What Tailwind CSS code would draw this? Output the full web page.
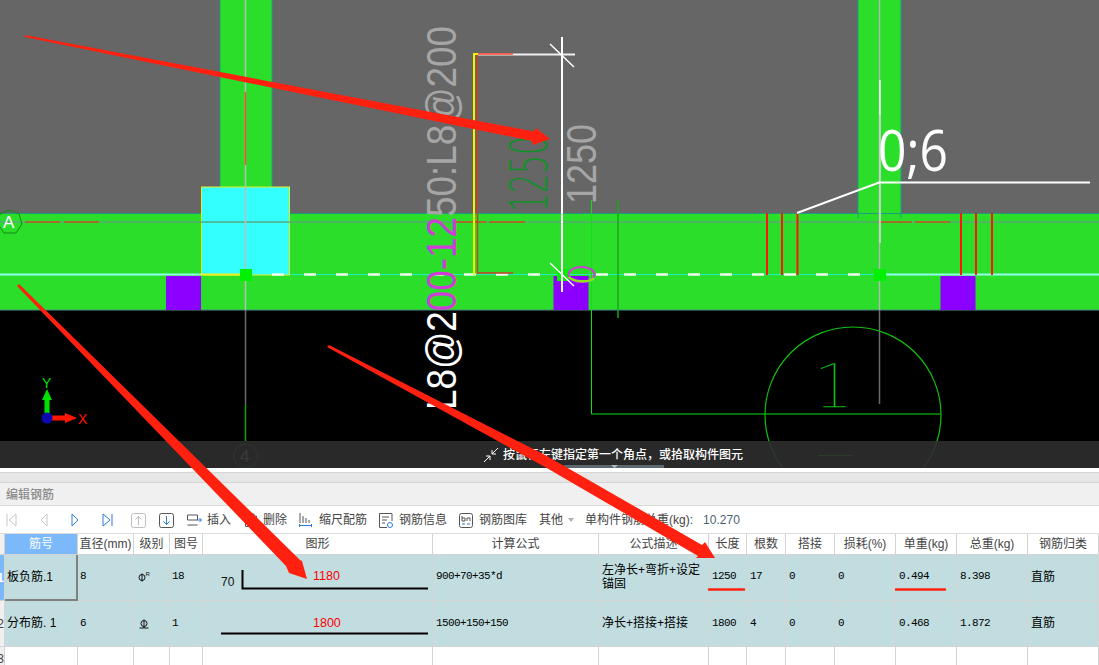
<!DOCTYPE html>
<html lang="zh-CN">
<head>
  <meta charset="UTF-8">
  <title>编辑钢筋</title>
  <script src="https://cdn.jsdelivr.net/npm/@tailwindcss/browser@4"></script>
</head>
<body class="relative w-[1099px] h-[665px] overflow-hidden bg-white text-[12px] text-[#444] font-['Liberation_Sans','Noto_Sans_CJK_SC',sans-serif]">

  <!-- CAD canvas -->
  <div class="relative h-[468px] bg-black overflow-hidden">
    <svg width="1099" height="468" viewBox="0 0 1099 468" class="block">
      <rect width="1099" height="213" fill="#666666"/>

      <!-- walls -->
      <rect x="220" y="-2" width="52" height="192" fill="#2ade2a" stroke="#1d9a80"/>
      <rect x="858" y="-2" width="43" height="220" fill="#2ade2a" stroke="#1d9a80"/>
      <rect x="0" y="213" width="1099" height="97" fill="#2ade2a"/>
      <path d="M0 213.500H1099" stroke="#1d9a80"/>
      <path d="M0 310H1099" stroke="#4f8f7f"/>
      <path d="M858 213v5M901 213v5" stroke="#1d9a80"/>

      <!-- column and hidden ribs -->
      <rect x="201.500" y="187" width="88" height="88" fill="#33ffff" stroke="#e8f020"/>
      <rect x="166" y="276" width="35" height="34" fill="#8c00ff"/>
      <rect x="553.500" y="276" width="35" height="34" fill="#8c00ff"/>
      <rect x="940.500" y="276" width="35" height="34" fill="#8c00ff"/>

      <!-- axes -->
      <path d="M0 222H1099" stroke="#5aa878" stroke-width="1.500"/>
      <path d="M25 222H60M64 222H99M454 222H486M489 222H525M878 222H912M915 222H950" stroke="#c0561a" stroke-width="1.500"/>
      <path d="M245.500 0V310" stroke="#b8c0b8" stroke-width="1.500"/>
      <path d="M245.500 92V165" stroke="#ff4a30" stroke-width="1.500"/>
      <path d="M245.500 310V405" stroke="#6a6a6a" stroke-width="1.500"/>
      <path d="M245.500 405V441" stroke="#0ea30e" stroke-width="1.500"/>
      <path d="M879.500 0V310" stroke="#b5b5b5" stroke-width="1.500"/>
      <path d="M879.500 310V404" stroke="#6a6a6a" stroke-width="1.500"/>
      <path d="M880 80V115" stroke="#ffffff" stroke-width="1.500"/>
      <path d="M880 115V243" stroke="#d8d8d8" stroke-width="1.500"/>

      <!-- rebar line -->
      <path d="M0 274.500H201" stroke="#90fff0" stroke-width="2"/>
      <path d="M290 274.500H940" stroke="#20f0c0" stroke-width="1"/>
      <path d="M272 274.500H284M304 274.500H316M336 274.500H348M368 274.500H380M400 274.500H412M432 274.500H444M464 274.500H476M496 274.500H508M528 274.500H540M596 274.500H608M624 274.500H636M656 274.500H668M688 274.500H700M720 274.500H732M752 274.500H764M784 274.500H796M816 274.500H828M848 274.500H860" stroke="#f0fff0" stroke-width="2.500"/>
      <path d="M885 274.500H1099" stroke="#90fff0" stroke-width="2"/>
      <path d="M201 274.500H240" stroke="#f0f020" stroke-width="2"/>
      <path d="M767 213V275M782 213V275M797.500 213V275M961 213V275M976 213V275M992 213V275" stroke="#ff1500" stroke-width="2"/>

      <!-- grip points -->
      <rect x="240" y="269" width="12" height="12" fill="#00f000"/>
      <rect x="557" y="269" width="12" height="12" fill="#00f000"/>
      <rect x="874" y="269" width="12" height="12" fill="#00f000"/>

      <!-- dimension -->
      <path d="M474 275V54H478" fill="none" stroke="#f5f500" stroke-width="2"/>
      <path d="M477.500 55V273H513" fill="none" stroke="#c8402a" stroke-width="1.500"/>
      <path d="M478 54.500H575" stroke="#f0f0f0" stroke-width="2"/>
      <path d="M478 54H513" stroke="#ff4a30" stroke-width="1.500"/>
      <path d="M562 37V292" stroke="#ffffff" stroke-width="2"/>
      <path d="M550 44L574 67M550 263L574 286" stroke="#ffffff" stroke-width="1.500"/>
      <path d="M591.500 200V414H941" fill="none" stroke="#10e010" stroke-width="1"/>
      <path d="M618 200V318" stroke="#18a818" stroke-width="1.500"/>

      <ellipse cx="581.500" cy="274.500" rx="13" ry="7.500" fill="none" stroke="#d03cd8" stroke-width="2"/>
      <path d="M569 277C573 282 590 283 594 278" fill="none" stroke="#90e020" stroke-width="2.500"/>

      <!-- labels -->
      <text transform="translate(456,410) rotate(-90)" textLength="384" lengthAdjust="spacingAndGlyphs" font-family="Liberation Sans" font-size="42" fill="#a6a6a6"><tspan fill="#ffffff">L8@2</tspan><tspan fill="#d03cd8">00-12</tspan><tspan fill="#a6a6a6">50:L8@200</tspan></text>
      <text transform="translate(596,204) rotate(-90)" textLength="80" lengthAdjust="spacingAndGlyphs" font-family="Liberation Sans" font-size="42" fill="#a6a6a6">1250</text>
      <text transform="translate(547,212) rotate(-90)" textLength="76" lengthAdjust="spacingAndGlyphs" font-family="DejaVu Sans" font-weight="200" font-size="52" fill="#0f9028">1250</text>
      <text x="878" y="171" textLength="70" lengthAdjust="spacingAndGlyphs" font-family="Open Sans" font-size="56" fill="#ffffff">0;6</text>
      <path d="M797 213L879 182.500H1090" fill="none" stroke="#ffffff" stroke-width="2"/>

      <!-- axis bubbles -->
      <path d="M9 210L19 214L22 224L16 233L4 233L-2 224L0 214Z" fill="none" stroke="#148a14"/>
      <text x="3" y="228" font-family="Liberation Sans" font-size="17" fill="#ffffff">A</text>
      <circle cx="245.500" cy="456" r="12" fill="none" stroke="#0c9a0c"/>
      <text x="240" y="462" font-family="Liberation Sans" font-size="17" fill="#b0b0b0">4</text>
      <circle cx="853" cy="415" r="88" fill="none" stroke="#10c010" stroke-width="1.200"/>
      <text x="813" y="408" textLength="41" lengthAdjust="spacingAndGlyphs" font-family="DejaVu Sans" font-weight="200" font-size="62" fill="#10c010" stroke="#000000" stroke-width="1.500">1</text>
      <path d="M818 455.500H853" stroke="#10c010"/>

      <!-- UCS icon -->
      <path d="M47 418V400" stroke="#00e000" stroke-width="5"/>
      <path d="M47 389L42 400H52Z" fill="#00e000"/>
      <path d="M47 418H68" stroke="#ff1500" stroke-width="5"/>
      <path d="M77 418L65 413V423Z" fill="#ff1500"/>
      <circle cx="47" cy="418" r="5.500" fill="#0a0ab0"/>
      <text x="42" y="388" font-family="Liberation Sans" font-size="14" fill="#00e000">Y</text>
      <text x="78" y="424" font-family="Liberation Sans" font-size="14" fill="#ff1500">X</text>
    </svg>

    <!-- command hint -->
    <div class="absolute left-0 right-0 bottom-0 h-[27px] bg-[#2d2d2d]/90 flex items-center pl-[484px] gap-[5px] text-white font-medium">
      <svg width="14" height="14" viewBox="0 0 14 14" fill="none" stroke="#ffffff" stroke-width="1"><path d="M0 14L6 8M2 8H6V12M14 0L8 6M8 2V6H12"/></svg>
      <span>按鼠标左键指定第一个角点，或拾取构件图元</span>
    </div>
    <div class="absolute left-[564px] bottom-0 w-[100px] h-[3px] bg-[#5d6770] flex justify-center">
      <svg width="7" height="3" viewBox="0 0 7 3"><path d="M0 0H7L3.500 3Z" fill="#b5bcc2"/></svg>
    </div>
  </div>

  <!-- rebar editor panel -->
  <div class="h-[4px] bg-white"></div>
  <div class="h-[11px] bg-[#e6e6e6] border-y border-[#d6d6d6]"></div>
  <div class="h-[23px] bg-[#f0f0f0] border-b border-[#dcdcdc] pl-[6px] pt-[1px] flex items-center font-medium text-[#8a8a8a]">编辑钢筋</div>

  <div class="h-[28px] border-b border-[#dcdcdc] pt-[1px] flex items-center">
    <svg class="ml-[6px]" width="11" height="14" viewBox="0 0 11 14" fill="none" stroke="#c8c8c8"><path d="M1 1V13M10 1L3 7L10 13Z"/></svg>
    <svg class="ml-[23px]" width="8" height="14" viewBox="0 0 8 14" fill="none" stroke="#c8c8c8"><path d="M7 1L1 7L7 13Z"/></svg>
    <svg class="ml-[23px]" width="8" height="14" viewBox="0 0 8 14" fill="none" stroke="#2b7bd6"><path d="M1 1L7 7L1 13Z"/></svg>
    <svg class="ml-[23px]" width="11" height="14" viewBox="0 0 11 14" fill="none" stroke="#2b7bd6"><path d="M10 1V13M1 1L8 7L1 13Z"/></svg>
    <svg class="ml-[18px]" width="15" height="15" viewBox="0 0 15 15" fill="none" stroke="#bdbdbd"><rect x="0.500" y="0.500" width="14" height="14" rx="2"/><path d="M7.500 12V3.500M4.500 6.500L7.500 3.500L10.500 6.500"/></svg>
    <svg class="ml-[13px]" width="15" height="15" viewBox="0 0 15 15" fill="none"><rect x="0.500" y="0.500" width="14" height="14" rx="2" stroke="#555"/><path d="M7.500 3V11.500M4.500 8.500L7.500 11.500L10.500 8.500" stroke="#2b7bd6"/></svg>
    <svg class="ml-[13px]" width="15" height="12" viewBox="0 0 15 12" fill="none"><path d="M0.500 1H10.500V6H0.500ZM0.500 11H10.500" stroke="#555"/><path d="M10 6H14.500M12.500 4L14.500 6L12.500 8" stroke="#2b7bd6"/></svg>
    <span class="ml-[5px]">插入</span>
    <svg class="ml-[13px]" width="14" height="14" viewBox="0 0 14 14" fill="none" stroke="#555"><path d="M1.500 3H12.500V13.500H1.500ZM4 3V1H10V3"/></svg>
    <span class="ml-[5px]">删除</span>
    <svg class="ml-[12px]" width="13" height="14" viewBox="0 0 13 14" fill="none"><path d="M1 0V10M4 3V10M7 5V10M10 7V10" stroke="#555"/><path d="M0.500 11V14M12.500 11V14M0 12.500H13" stroke="#2b7bd6"/></svg>
    <span class="ml-[7px]">缩尺配筋</span>
    <svg class="ml-[12px]" width="14" height="15" viewBox="0 0 14 15" fill="none"><path d="M13 8V0.500H0.500V14.500H8M3 4H10M3 7H8M3 10H6" stroke="#555"/><circle cx="11" cy="12" r="2.500" stroke="#2b7bd6"/></svg>
    <span class="ml-[6px]">钢筋信息</span>
    <svg class="ml-[12px]" width="14" height="15" viewBox="0 0 14 15" fill="none"><rect x="0.500" y="0.500" width="13" height="14" rx="2" stroke="#555"/><path d="M3 3V8H6V5H3M8 8V5H11V8" stroke="#555"/><path d="M3 11H6M8 11H11" stroke="#2b7bd6"/></svg>
    <span class="ml-[6px]">钢筋图库</span>
    <span class="ml-[12px]">其他</span>
    <svg class="ml-[5px]" width="6" height="4" viewBox="0 0 6 4"><path d="M0 0H6L3 4Z" fill="#b0b0b0"/></svg>
    <span class="ml-[11px]">单构件钢筋总重(kg):</span>
    <span class="ml-[10px] text-[#4d5f70]">10.270</span>
  </div>

  <!-- rebar table -->
  <div class="grid grid-cols-[5px_73px_56px_36px_33px_230px_166px_110px_38px_39px_49px_61px_61px_71px_71px] grid-rows-[21px_46px_46px_24px] [&>div]:flex [&>div]:items-center [&>div]:overflow-hidden [&>div]:border-r [&>div]:border-b [&>div]:border-[#d4d4d4]">
    <div class="bg-[#f0f0f0]"></div>
    <div class="justify-center bg-[#7cb9fb] text-white">筋号</div>
    <div class="justify-center">直径(mm)</div>
    <div class="justify-center">级别</div>
    <div class="justify-center">图号</div>
    <div class="justify-center">图形</div>
    <div class="justify-center">计算公式</div>
    <div class="justify-center">公式描述</div>
    <div class="justify-center">长度</div>
    <div class="justify-center">根数</div>
    <div class="justify-center">搭接</div>
    <div class="justify-center">损耗(%)</div>
    <div class="justify-center">单重(kg)</div>
    <div class="justify-center">总重(kg)</div>
    <div class="justify-center">钢筋归类</div>

    <div class="bg-[#7cb9fb] text-white justify-end font-bold">1</div>
    <div class="bg-[#c1dde0] text-black pl-[2px] !border-r-2 !border-b-2 !border-[#808080]">板负筋.1</div>
    <div class="bg-[#c1dde0] text-black pl-[2px] pb-[2px] font-['Liberation_Mono',monospace] text-[11px] tracking-[-0.6px]">8</div>
    <div class="bg-[#c1dde0] pl-[4px] pb-[3px]">
      <svg width="12" height="11" viewBox="0 0 12 11" fill="none" stroke="#111"><circle cx="4" cy="6.500" r="3"/><path d="M4 2.500V10.500"/><text x="7.500" y="5" font-family="Liberation Sans" font-size="6" fill="#111" stroke="none">R</text></svg>
    </div>
    <div class="bg-[#c1dde0] text-black pl-[2px] pb-[2px] font-['Liberation_Mono',monospace] text-[11px] tracking-[-0.6px]">18</div>
    <div class="bg-[#c1dde0] text-black">
      <svg width="228" height="44" viewBox="0 0 228 44" fill="none">
        <text x="18" y="30" font-family="Liberation Sans" font-size="12" fill="#111">70</text>
        <text x="110" y="24" font-family="Liberation Sans" font-size="12.500" fill="#ff0000">1180</text>
        <path d="M39.500 14V32.500H225" stroke="#000" stroke-width="2"/>
      </svg>
    </div>
    <div class="bg-[#c1dde0] text-black pl-[3px] pb-[2px] font-['Liberation_Mono',monospace] text-[11px] tracking-[-0.6px]">900+70+35*d</div>
    <div class="bg-[#c1dde0] text-black pl-[3px] pb-[2px] leading-[14px]">左净长+弯折+设定<br>锚固</div>
    <div class="bg-[#c1dde0] text-black pl-[3px] pb-[2px] font-['Liberation_Mono',monospace] text-[11px] tracking-[-0.6px]">1250</div>
    <div class="bg-[#c1dde0] text-black pl-[3px] pb-[2px] font-['Liberation_Mono',monospace] text-[11px] tracking-[-0.6px]">17</div>
    <div class="bg-[#c1dde0] text-black pl-[3px] pb-[2px] font-['Liberation_Mono',monospace] text-[11px] tracking-[-0.6px]">0</div>
    <div class="bg-[#c1dde0] text-black pl-[3px] pb-[2px] font-['Liberation_Mono',monospace] text-[11px] tracking-[-0.6px]">0</div>
    <div class="bg-[#c1dde0] text-black pl-[3px] pb-[2px] font-['Liberation_Mono',monospace] text-[11px] tracking-[-0.6px]">0.494</div>
    <div class="bg-[#c1dde0] text-black pl-[3px] pb-[2px] font-['Liberation_Mono',monospace] text-[11px] tracking-[-0.6px]">8.398</div>
    <div class="bg-[#c1dde0] text-black pl-[3px] pb-[2px]">直筋</div>

    <div class="bg-[#f0f0f0] justify-end">2</div>
    <div class="bg-[#c1dde0] text-black pl-[2px] pb-[2px]">分布筋.&nbsp;1</div>
    <div class="bg-[#c1dde0] text-black pl-[2px] pb-[1px] font-['Liberation_Mono',monospace] text-[11px] tracking-[-0.6px]">6</div>
    <div class="bg-[#c1dde0] pl-[5px]">
      <svg width="10" height="10" viewBox="0 0 10 10" fill="none" stroke="#111"><circle cx="5" cy="4.500" r="3"/><path d="M5 0.500V9M0.500 9H9.500"/></svg>
    </div>
    <div class="bg-[#c1dde0] text-black pl-[2px] pb-[1px] font-['Liberation_Mono',monospace] text-[11px] tracking-[-0.6px]">1</div>
    <div class="bg-[#c1dde0] text-black">
      <svg width="228" height="44" viewBox="0 0 228 44" fill="none">
        <text x="110" y="25" font-family="Liberation Sans" font-size="12.500" fill="#ff0000">1800</text>
        <path d="M18 31.500H225" stroke="#000" stroke-width="2"/>
      </svg>
    </div>
    <div class="bg-[#c1dde0] text-black pl-[3px] pb-[1px] font-['Liberation_Mono',monospace] text-[11px] tracking-[-0.6px]">1500+150+150</div>
    <div class="bg-[#c1dde0] text-black pl-[3px] pb-[2px]">净长+搭接+搭接</div>
    <div class="bg-[#c1dde0] text-black pl-[3px] pb-[1px] font-['Liberation_Mono',monospace] text-[11px] tracking-[-0.6px]">1800</div>
    <div class="bg-[#c1dde0] text-black pl-[3px] pb-[1px] font-['Liberation_Mono',monospace] text-[11px] tracking-[-0.6px]">4</div>
    <div class="bg-[#c1dde0] text-black pl-[3px] pb-[1px] font-['Liberation_Mono',monospace] text-[11px] tracking-[-0.6px]">0</div>
    <div class="bg-[#c1dde0] text-black pl-[3px] pb-[1px] font-['Liberation_Mono',monospace] text-[11px] tracking-[-0.6px]">0</div>
    <div class="bg-[#c1dde0] text-black pl-[3px] pb-[1px] font-['Liberation_Mono',monospace] text-[11px] tracking-[-0.6px]">0.468</div>
    <div class="bg-[#c1dde0] text-black pl-[3px] pb-[1px] font-['Liberation_Mono',monospace] text-[11px] tracking-[-0.6px]">1.872</div>
    <div class="bg-[#c1dde0] text-black pl-[3px] pb-[2px]">直筋</div>

    <div class="bg-[#f0f0f0] justify-end">3</div>
    <div></div><div></div><div></div><div></div><div></div><div></div><div></div><div></div><div></div><div></div><div></div><div></div><div></div><div></div>
  </div>

  <!-- red annotations drawn over the screenshot -->
  <svg class="absolute inset-0 pointer-events-none" width="1099" height="665" viewBox="0 0 1099 665" fill="#ff2010">
    <polygon points="25,35 534,131.500 536,128 550,139 533,145 532,141 25,37"/>
    <polygon points="19,284 300,560 302,561 307,579 289,573 286,566 17,286"/>
    <polygon points="329,345 545,455 702,545 705,542 715,558 696,558 698,556 545,467 327,347"/>
    <path d="M709 589.500H744M896 589.500H945" stroke="#ff2010" stroke-width="2.500" stroke-linecap="round"/>
  </svg>
</body>
</html>
